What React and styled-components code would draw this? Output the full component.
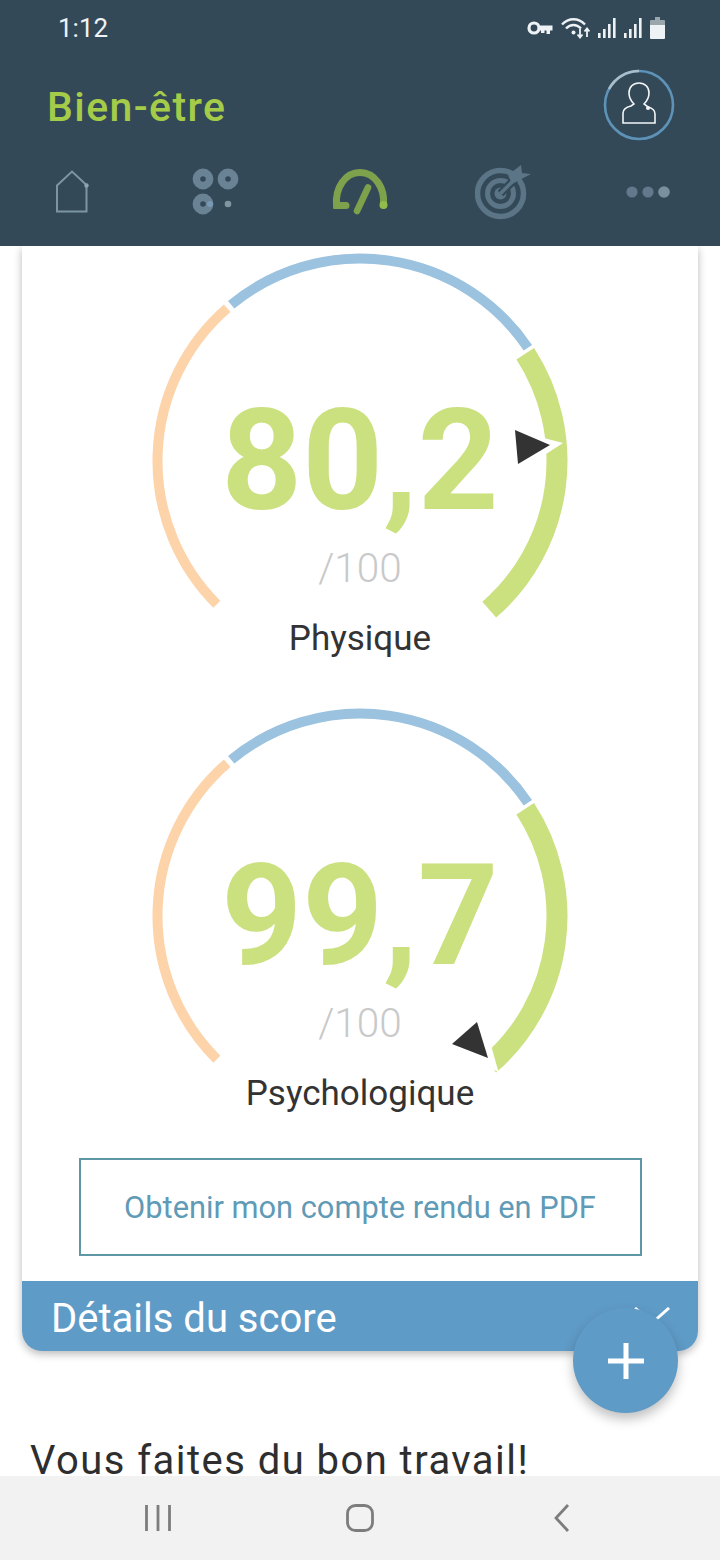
import React from 'react';
import styled, { createGlobalStyle } from 'styled-components';

const GlobalStyle = createGlobalStyle`
  html, body { margin: 0; padding: 0; background: #fff; }
  body { font-family: Roboto, "Liberation Sans", sans-serif; }
`;

const Phone = styled.div`
  position: relative;
  width: 720px;
  height: 1560px;
  display: flex;
  flex-direction: column;
  overflow: hidden;
  background: #fff;
`;

const Header = styled.header`
  position: relative;
  z-index: 2;
  height: 246px;
  flex: none;
  background: #344958;
  display: flex;
  flex-direction: column;
`;

const StatusBar = styled.div`
  height: 56px;
  display: flex;
  align-items: center;
  justify-content: space-between;
  padding: 0 55px 0 58px;
  color: #eef2f4;
  font-size: 26px;
`;

const StatusIcons = styled.div`
  display: flex;
  align-items: center;
  gap: 8px;
`;

const TitleRow = styled.div`
  height: 98px;
  display: flex;
  align-items: center;
  justify-content: space-between;
  padding: 0 45px 0 47px;
`;

const Title = styled.h1`
  margin: 4px 0 0;
  font-size: 41px;
  font-weight: 500;
  letter-spacing: 1.4px;
  color: #a5cc48;
`;

const Tabs = styled.nav`
  height: 72px;
  margin-top: 2px;
  display: grid;
  grid-template-columns: repeat(5, 1fr);
  align-items: center;
  justify-items: center;
`;

const Main = styled.main`
  flex: 1;
  min-height: 0;
  overflow: hidden;
`;

const Card = styled.section`
  margin: 0 22px;
  background: #fff;
  border-radius: 0 0 20px 20px;
  box-shadow: 0 3px 8px rgba(0, 0, 0, 0.28);
`;

const GaugeBlock = styled.div`
  height: 455px;
  display: grid;
  justify-items: center;
`;

const GaugeArt = styled.svg`
  grid-area: 1 / 1;
  display: block;
`;

const Readout = styled.div`
  grid-area: 1 / 1;
  display: flex;
  flex-direction: column;
  align-items: center;
  padding-top: 135px;
`;

const Score = styled.div`
  font-size: 141px;
  font-weight: 700;
  line-height: 160px;
  color: #cbe07f;
`;

const OutOf = styled.div`
  margin-top: 5px;
  font-size: 40.5px;
  font-weight: 300;
  line-height: 44px;
  color: #c9c9c9;
`;

const GaugeLabel = styled.div`
  margin-top: 30px;
  font-size: 35px;
  line-height: 38px;
  color: #333;
`;

const PdfButton = styled.button`
  display: block;
  box-sizing: border-box;
  width: 563px;
  height: 98px;
  margin: 2px auto 25px;
  background: #fff;
  border: 2px solid #5f97a6;
  font-family: inherit;
  font-size: 30.8px;
  color: #5f9ab6;
`;

const DetailsBar = styled.div`
  box-sizing: border-box;
  height: 70px;
  display: flex;
  align-items: center;
  justify-content: space-between;
  padding: 4px 28px 0 29px;
  background: #5f9bc7;
  border-radius: 0 0 20px 20px;
  color: #fff;
  font-size: 40px;
`;

const Chevron = styled.svg`
  margin-top: -4px;
`;

const Message = styled.p`
  margin: 86px 0 0 30px;
  font-size: 40px;
  line-height: 48px;
  letter-spacing: 1.45px;
  color: #2e2e2e;
  white-space: nowrap;
`;

const Fab = styled.button`
  position: absolute;
  z-index: 3;
  left: 573px;
  top: 1308px;
  width: 105px;
  height: 105px;
  padding: 0;
  display: flex;
  align-items: center;
  justify-content: center;
  border: 0;
  border-radius: 50%;
  background: #5f9bc7;
  box-shadow: 0 6px 12px rgba(0, 0, 0, 0.25);
`;

const NavBar = styled.div`
  position: relative;
  z-index: 2;
  height: 84px;
  flex: none;
  background: #f2f2f2;
  display: grid;
  grid-template-columns: repeat(3, 202px);
  justify-content: center;
  align-items: center;
  justify-items: center;
`;

const KeyIcon = () => (
  <svg width="26" height="16" viewBox="0 0 26 16" fill="none">
    <circle cx="7" cy="8" r="5" stroke="#eef2f4" strokeWidth="3.2" />
    <path d="M12 5.500h13.500v5h-2.500v3.500h-3.500v-3.500h-2v2.500h-3.500v-2.500H12z" fill="#eef2f4" />
  </svg>
);

const WifiIcon = () => (
  <svg width="29" height="22" viewBox="0 0 29 22" fill="none">
    <path d="M1 7.500C7.500 0.500 17.500 0.500 24 7.500" stroke="#eef2f4" strokeWidth="2.400" />
    <path d="M5 11.500C9.500 6.800 15.500 6.800 20 11.500" stroke="#eef2f4" strokeWidth="2.400" />
    <circle cx="12.500" cy="15.500" r="2" fill="#eef2f4" />
    <path d="M19 12v8M16.500 17.500l2.500 3 2.500-3M26 20v-8M23.500 14.500l2.500-3 2.500 3" stroke="#eef2f4" strokeWidth="1.800" />
  </svg>
);

const SignalIcon = () => (
  <svg width="18" height="20" viewBox="0 0 18 20" fill="#eef2f4">
    <rect x="0" y="15" width="2.600" height="5" />
    <rect x="5" y="11" width="2.600" height="9" />
    <rect x="10" y="6" width="2.600" height="14" />
    <rect x="15" y="0" width="2.600" height="20" />
  </svg>
);

const BatteryIcon = () => (
  <svg width="15" height="22" viewBox="0 0 15 22">
    <path d="M5 0h5v3h4a1 1 0 0 1 1 1v4H0V4a1 1 0 0 1 1-1h4z" fill="#9aa6ae" />
    <path d="M0 8h15v13a1 1 0 0 1-1 1H1a1 1 0 0 1-1-1z" fill="#eef2f4" />
  </svg>
);

const Avatar = () => (
  <svg width="72" height="72" viewBox="0 0 72 72" fill="none">
    <circle cx="36" cy="36" r="34" stroke="#5d93b8" strokeWidth="2.600" />
    <path d="M36 2a34 34 0 0 0-30 18" stroke="#a9bdcb" strokeWidth="2.600" />
    <path
      d="M20 54V44c0-4 4-6 8-7l3-2c-3-3-5-7-5-11 0-6 4-10 10-10s10 4 10 10c0 4-2 8-5 11l4 3c4 1 7 3 7 7v9z"
      stroke="#f2f5f7"
      strokeWidth="1.600"
    />
    <circle cx="45" cy="39" r="2" fill="#f2f5f7" />
  </svg>
);

const HomeIcon = () => (
  <svg width="34" height="44" viewBox="0 0 34 44" fill="none">
    <path d="M31.500 15L17 1.500 2 15.500V41.500H31.500V15" stroke="#7b95a5" strokeWidth="2" />
    <circle cx="31.500" cy="15.500" r="2.200" fill="#8ba3b2" />
  </svg>
);

const AppsIcon = () => (
  <svg width="48" height="48" viewBox="0 0 48 48" fill="none">
    <circle cx="11" cy="11" r="6.600" stroke="#6a8394" strokeWidth="7.600" />
    <circle cx="36" cy="11" r="6.600" stroke="#6a8394" strokeWidth="7.600" />
    <circle cx="11" cy="36" r="6.600" stroke="#6a8394" strokeWidth="7.600" />
    <circle cx="18" cy="36" r="3" fill="#7a98b4" />
    <circle cx="36" cy="36" r="3.300" fill="#80979f" />
  </svg>
);

const SpeedIcon = () => (
  <svg width="58" height="48" viewBox="0 0 58 48" fill="none">
    <path d="M15 37.500H5.500C4 20 14 4.500 29 4.500S54 20 52.500 37" stroke="#7ea24c" strokeWidth="7" strokeLinecap="round" />
    <path d="M37 19.500L26 43" stroke="#7ea24c" strokeWidth="6.500" strokeLinecap="round" />
    <circle cx="52.500" cy="37" r="4" fill="#92bb4a" />
  </svg>
);

const TargetIcon = () => (
  <svg width="58" height="56" viewBox="0 0 58 56" fill="none">
    <circle cx="25.500" cy="29.500" r="23" stroke="#5b7587" strokeWidth="5.500" />
    <circle cx="25.500" cy="29.500" r="13" stroke="#5b7587" strokeWidth="5" />
    <circle cx="25.500" cy="29.500" r="6" fill="#5b7587" />
    <path d="M25.500 29.500L40 15" stroke="#344958" strokeWidth="8" />
    <path d="M25.500 29.500L40 15" stroke="#5b7587" strokeWidth="3.500" />
    <path d="M33 11L46 1l1 8 9 1-19 10z" fill="#5b7587" />
  </svg>
);

const MoreIcon = () => (
  <svg width="46" height="16" viewBox="0 0 46 16" fill="#62798b">
    <circle cx="7" cy="8" r="5.600" />
    <circle cx="23" cy="8" r="5.600" />
    <circle cx="39" cy="8" r="5.800" fill="#7a90a0" />
  </svg>
);

const polar = (r, deg) => {
  const a = (deg * Math.PI) / 180;
  return [220 + r * Math.sin(a), 215 - r * Math.cos(a)];
};

const arc = (r, from, to) => {
  const [x1, y1] = polar(r, from);
  const [x2, y2] = polar(r, to);
  return `M${x1} ${y1}A${r} ${r} 0 ${to - from > 180 ? 1 : 0} 1 ${x2} ${y2}`;
};

const Gauge = ({ score, label, notch, pointer }) => (
  <GaugeBlock>
    <GaugeArt width="440" height="455" viewBox="0 0 440 455" fill="none">
      <path d={arc(202.5, -135, -41)} stroke="#fdd3a9" strokeWidth="10" />
      <path d={arc(202.5, -39.5, 56)} stroke="#9bc2de" strokeWidth="10" />
      <path d={arc(197, 57, 139)} stroke="#cbe07f" strokeWidth="21" />
      <polygon points={notch} fill="#fff" />
      <polygon points={pointer} fill="#333" />
    </GaugeArt>
    <Readout>
      <Score>{score}</Score>
      <OutOf>/100</OutOf>
      <GaugeLabel>{label}</GaugeLabel>
    </Readout>
  </GaugeBlock>
);

const App = () => {
  return (
    <Phone>
      <GlobalStyle />
      <Header>
        <StatusBar>
          <span>1:12</span>
          <StatusIcons>
            <KeyIcon />
            <WifiIcon />
            <SignalIcon />
            <SignalIcon />
            <BatteryIcon />
          </StatusIcons>
        </StatusBar>
        <TitleRow>
          <Title>Bien-être</Title>
          <Avatar />
        </TitleRow>
        <Tabs>
          <HomeIcon />
          <AppsIcon />
          <SpeedIcon />
          <TargetIcon />
          <MoreIcon />
        </Tabs>
      </Header>
      <Main>
        <Card>
          <Gauge
            score="80,2"
            label="Physique"
            notch="400,191 423,197 403,210"
            pointer="375,184 378,218 410,199"
          />
          <Gauge
            score="99,7"
            label="Psychologique"
            notch="358.5,371 344,319 310,349"
            pointer="337,321 312,343 348,357"
          />
          <PdfButton>Obtenir mon compte rendu en PDF</PdfButton>
          <DetailsBar>
            <span>Détails du score</span>
            <Chevron width="36" height="18" viewBox="0 0 36 18" fill="none">
              <path d="M1 1L18 16 35 1" stroke="#fff" strokeWidth="3" />
            </Chevron>
          </DetailsBar>
        </Card>
        <Message>Vous faites du bon travail!</Message>
      </Main>
      <Fab>
        <svg width="38" height="38" viewBox="0 0 38 38">
          <path d="M19 1v36M1 19h36" stroke="#fff" strokeWidth="5" />
        </svg>
      </Fab>
      <NavBar>
        <svg width="28" height="28" viewBox="0 0 28 28" fill="none">
          <path d="M2.500 1v26M14 1v26M25.500 1v26" stroke="#7d7d7d" strokeWidth="2.800" />
        </svg>
        <svg width="28" height="28" viewBox="0 0 28 28" fill="none">
          <rect x="1.500" y="1.500" width="25" height="25" rx="8" stroke="#7d7d7d" strokeWidth="2.800" />
        </svg>
        <svg width="18" height="28" viewBox="0 0 18 28" fill="none">
          <path d="M15 1L3 14l12 13" stroke="#7d7d7d" strokeWidth="2.800" />
        </svg>
      </NavBar>
    </Phone>
  );
};

export default App;
